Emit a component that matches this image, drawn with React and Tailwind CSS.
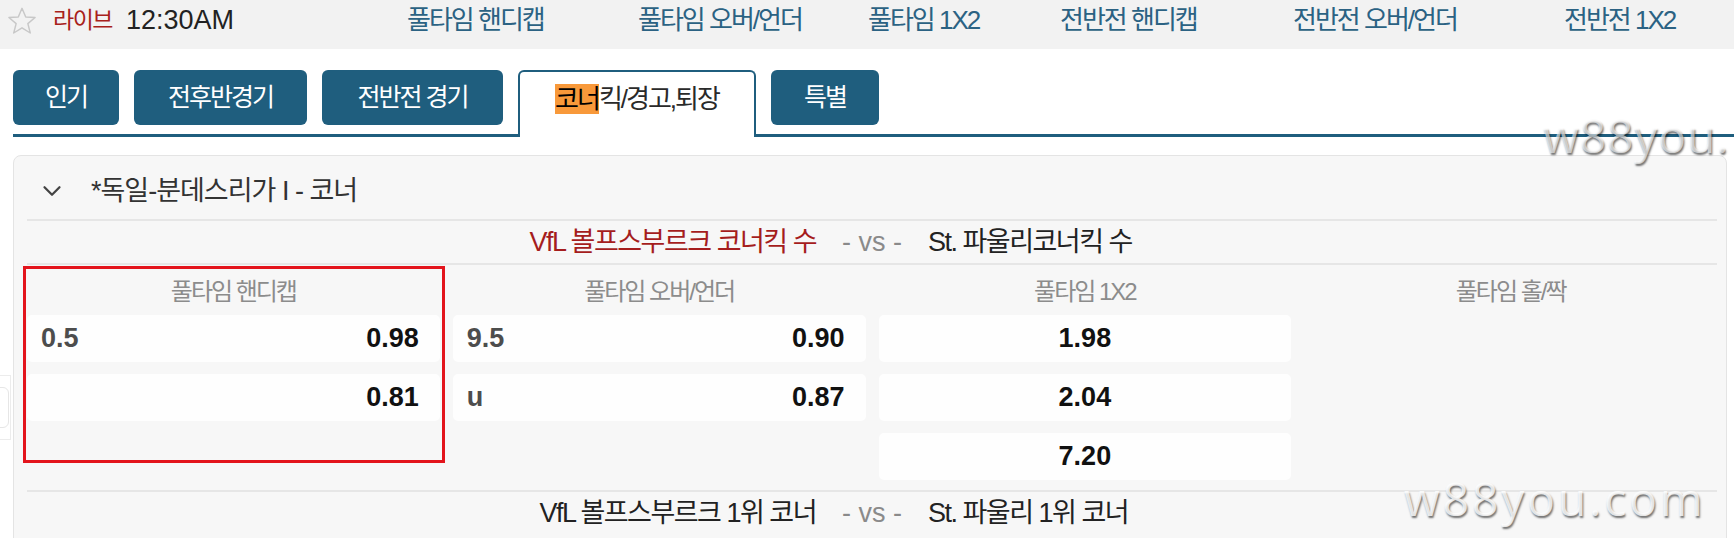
import { ChevronDown } from "lucide-react";

const FONT = "[font-family:'Liberation_Sans','Noto_Sans_CJK_KR',sans-serif]";

const NAV = [
  { label: "풀타임 핸디캡", w: "w-[231px]" },
  { label: "풀타임 오버/언더", w: "w-[230px]" },
  { label: "풀타임 1X2", w: "w-[192px]" },
  { label: "전반전 핸디캡", w: "w-[233px]" },
  { label: "전반전 오버/언더", w: "w-[271px]" },
  { label: "전반전 1X2", w: "w-[170px]" },
];

const TABS = [
  { label: "인기", w: "w-[106px]" },
  { label: "전후반경기", w: "w-[173px]" },
  { label: "전반전 경기", w: "w-[181px]" },
];

// one market cell
const Cell = ({ left, right, center }) => (
  <div className="flex h-[47px] items-center rounded-[5px] bg-[#fefefe] pl-[14px] pr-[21px]">
    {center ? (
      <span className="flex-1 pl-[7px] text-center text-[27px] font-bold text-[#111]">{center}</span>
    ) : (
      <>
        <span className="text-[27px] font-bold text-[#4d4d4d]">{left}</span>
        <span className="ml-auto text-[27px] font-bold text-[#111]">{right}</span>
      </>
    )}
  </div>
);

const Market = ({ title, children }) => (
  <div className="flex flex-col">
    <div className="flex h-[50px] items-center justify-center pt-[4px] text-[24px] tracking-[-2px] text-[#8c8c8c]">
      {title}
    </div>
    <div className="flex flex-col gap-[12px]">{children}</div>
  </div>
);

const Matchup = ({ home, away, red }) => (
  <div className="flex h-[42px] items-center text-[27px] tracking-[-1.5px]">
    <div className={"flex-1 text-right " + (red ? "text-[#a51d1d]" : "text-[#222]")}>{home}</div>
    <div className="w-[112px] text-center tracking-normal text-[#8a8a8a]">- vs -</div>
    <div className="flex-1 text-left text-[#222]">{away}</div>
  </div>
);

const Star = () => (
  <svg width="32" height="32" viewBox="0 0 24 24" fill="none" stroke="#c8c8c8" strokeWidth="1.1" strokeLinejoin="round">
    <polygon points="12,2.5 14.8,9 21.8,9.4 16.4,14 18.2,21 12,17.1 5.8,21 7.6,14 2.2,9.4 9.2,9" />
  </svg>
);

const App = () => {
  return (
    <div className={"relative h-[538px] w-[1734px] overflow-hidden bg-white " + FONT}>
      {/* top bar */}
      <div className="flex h-[49px] items-center bg-[#f2f2f2] pb-[8px]">
        <div className="flex w-[407px] items-center pl-[6px]">
          <Star />
          <span className="ml-[15px] text-[23px] tracking-[-1.5px] text-[#a8211b]">라이브</span>
          <span className="ml-[14px] text-[27px] text-[#222]">12:30AM</span>
        </div>
        {NAV.map((n) => (
          <div key={n.label} className={n.w + " text-[26px] tracking-[-2px] text-[#2b6283]"}>
            {n.label}
          </div>
        ))}
      </div>

      {/* tabs */}
      <div className="ml-[13px] mt-[21px] flex h-[67px] items-start gap-[15px] border-b-[3px] border-[#1f5e7e]">
        {TABS.map((t) => (
          <div
            key={t.label}
            className={t.w + " flex h-[55px] items-center justify-center rounded-[6px] bg-[#1f5e7e] text-[25px] tracking-[-2px] text-white"}
          >
            {t.label}
          </div>
        ))}
        <div className="relative z-10 flex h-[67px] w-[238px] items-start justify-center rounded-t-[6px] border-2 border-b-0 border-[#1f5e7e] bg-white pt-[12px] text-[26px] tracking-[-2px] text-[#2a2a2a]">
          <span className="inline-block bg-[#f8993a] leading-[30px] text-black">코너</span>
          <span className="leading-[30px]">킥/경고,퇴장</span>
        </div>
        <div className="flex h-[55px] w-[108px] items-center justify-center rounded-[6px] bg-[#1f5e7e] text-[25px] tracking-[-2px] text-white">
          특별
        </div>
      </div>

      {/* league panel */}
      <div className="ml-[13px] mt-[18px] h-[420px] w-[1714px] rounded-[8px] border border-[#e4e4e4] bg-[#f7f7f7]">
        <div className="ml-[13px] mr-[9px]">
          <div className="flex h-[63px] items-center pl-[10px] pt-[7px]">
            <ChevronDown size={30} strokeWidth={1.8} className="text-[#444]" />
            <span className="ml-[24px] text-[27px] tracking-[-1px] text-[#333]">*독일-분데스리가 I - 코너</span>
          </div>
          <div className="border-t-2 border-[#e6e6e6]">
            <Matchup red home="VfL 볼프스부르크 코너킥 수" away="St. 파울리코너킥 수" />
          </div>
          <div className="grid grid-cols-4 gap-x-[13px] border-t-2 border-[#e6e6e6] pb-[10px]">
            <Market title="풀타임 핸디캡">
              <Cell left="0.5" right="0.98" />
              <Cell left="" right="0.81" />
            </Market>
            <Market title="풀타임 오버/언더">
              <Cell left="9.5" right="0.90" />
              <Cell left="u" right="0.87" />
            </Market>
            <Market title="풀타임 1X2">
              <Cell center="1.98" />
              <Cell center="2.04" />
              <Cell center="7.20" />
            </Market>
            <Market title="풀타임 홀/짝" />
          </div>
          <div className="border-t-2 border-[#e6e6e6]">
            <Matchup home="VfL 볼프스부르크 1위 코너" away="St. 파울리 1위 코너" />
          </div>
        </div>
      </div>

      {/* faint element at the left edge */}
      <div className="absolute left-[-20px] top-[375px] h-[65px] w-[31px] border border-[#ececec]" />
      <div className="absolute left-[-20px] top-[387px] h-[41px] w-[29px] rounded-[6px] border border-[#e6e6e6]" />

      {/* highlight box */}
      <div className="absolute left-[23px] top-[266px] h-[197px] w-[422px] border-[3px] border-[#e3141c]" />

      {/* watermarks */}
      <div className="absolute left-[1543px] top-[101px] text-[46px] tracking-[1px] text-white/60 [font-family:'Open_Sans',sans-serif] [text-shadow:1px_2px_2px_rgba(0,0,0,0.55)]">
        w88you.
      </div>
      <div className="absolute left-[1404px] top-[464px] text-[46px] tracking-[3px] text-white/80 [font-family:'Open_Sans',sans-serif] [text-shadow:1px_2px_2px_rgba(0,0,0,0.55)]">
        w88you.com
      </div>
    </div>
  );
};

export default App;
